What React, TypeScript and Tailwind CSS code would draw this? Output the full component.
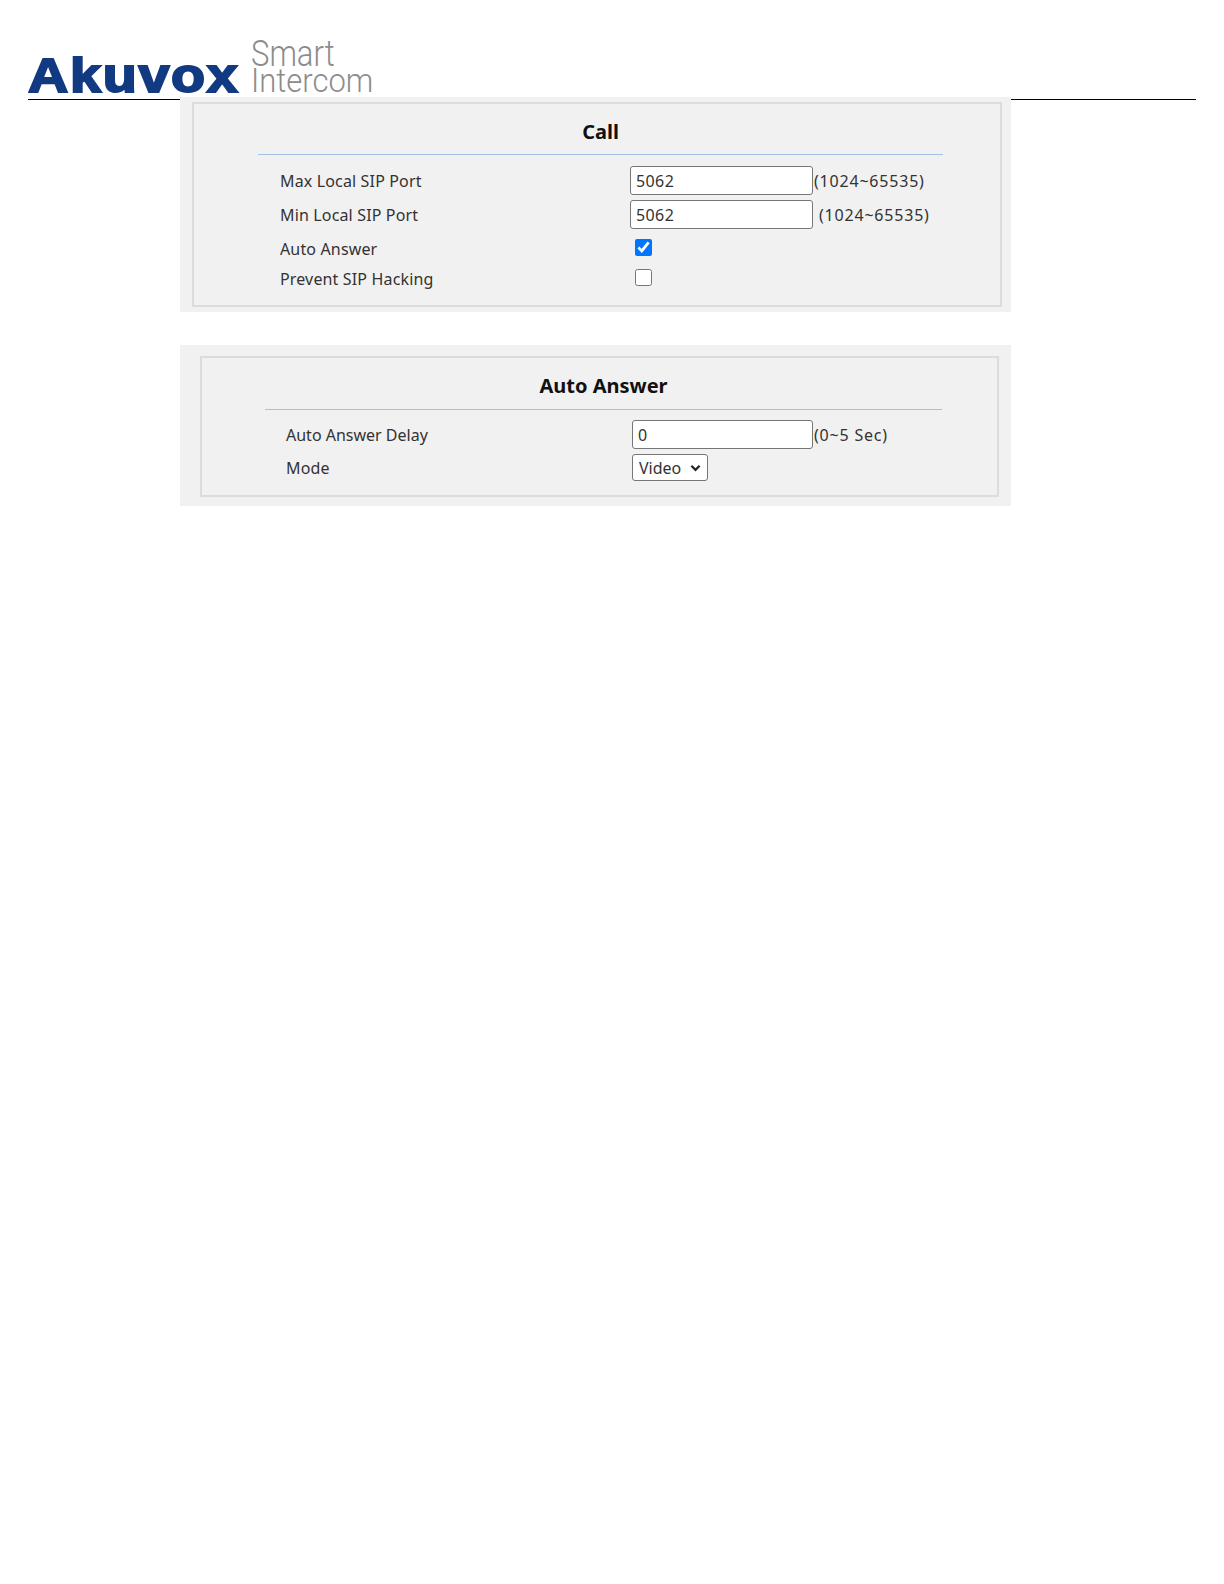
export default function App() {
  return (
    <div className="h-[1584px] w-[1224px] bg-white font-['Noto_Sans',sans-serif] text-[16px] text-[#333]">
      <Header />
      <div className="relative ml-[180px] mt-[-3px] flex w-[831px] flex-col gap-[33px]">
        <Panel title="Call" className="h-[215px] pb-[5px] pl-[12px] pr-[9px] pt-[5px]" lineClass="ml-[64px] w-[685px]" titleClass="h-[51px] pt-[16px]">
          <div className="flex flex-col pl-[86px] pt-[11px]">
            <Row label="Max Local SIP Port" labelWidth="w-[350px]" className="h-[29px]">
              <TextInput value="5062" widthClass="w-[183px]" />
              <Hint className="ml-[1px]">(1024~65535)</Hint>
            </Row>
            <Row label="Min Local SIP Port" labelWidth="w-[350px]" className="mt-[5px] h-[29px]">
              <TextInput value="5062" widthClass="w-[183px]" />
              <Hint className="ml-[6px]">(1024~65535)</Hint>
            </Row>
            <Row label="Auto Answer" labelWidth="w-[350px]" className="mt-[9px] h-[22px]">
              <input type="checkbox" defaultChecked className="mb-[4px] ml-[5px] h-[17px] w-[17px] accent-[#0075ff]" />
            </Row>
            <Row label="Prevent SIP Hacking" labelWidth="w-[350px]" className="mt-[8px] h-[22px]">
              <input type="checkbox" className="mb-[4px] ml-[5px] h-[17px] w-[17px]" />
            </Row>
          </div>
        </Panel>

        <Panel title="Auto Answer" className="h-[161px] pb-[9px] pl-[20px] pr-[12px] pt-[11px]" lineClass="ml-[63px] w-[677px]" titleClass="h-[52px] pt-[16px]">
          <div className="flex flex-col pl-[84px] pt-[10px]">
            <Row label="Auto Answer Delay" labelWidth="w-[346px] tracking-normal" className="h-[29px]">
              <TextInput value="0" widthClass="w-[181px]" />
              <Hint className="ml-[1px]">(0~5 Sec)</Hint>
            </Row>
            <Row label="Mode" labelWidth="w-[346px]" className="mt-[5px] h-[27px]">
              <div className="relative h-[27px] w-[76px]">
                <select defaultValue="Video" className="h-full w-full appearance-none rounded-[3px] border border-[#767676] bg-white pl-[6px] text-[16px] text-[#333]">
                  <option>Video</option>
                  <option>Audio</option>
                </select>
                <svg viewBox="0 0 12 8" className="pointer-events-none absolute right-[7px] top-[10px] h-[8px] w-[11px]">
                  <polyline points="1.5,1.5 6,6 10.5,1.5" fill="none" stroke="#222" strokeWidth="2.4" />
                </svg>
              </div>
            </Row>
          </div>
        </Panel>
      </div>
    </div>
  );
}

function Header() {
  return (
    <div className="ml-[28px] flex h-[100px] w-[1168px] items-start border-b border-black">
      <div className="mt-[50px] w-[223px] shrink-0 origin-left scale-x-[1.16] font-['Liberation_Sans',sans-serif] text-[48px] font-bold leading-[51px] tracking-[1.5px] text-[#123a82] [-webkit-text-stroke:2px_#123a82]">
        Akuvox
      </div>
      <div className="mt-[42px] flex flex-col font-['Roboto',sans-serif] text-[31px] font-light leading-[28px] text-[#8c8c8c]">
        <div className="h-[26px] origin-bottom scale-y-[1.2]">Smart</div>
        <div className="h-[28px] origin-bottom scale-y-[1.05]">Intercom</div>
      </div>
    </div>
  );
}

function Panel({
  title,
  className,
  lineClass,
  titleClass,
  children,
}: {
  title: string;
  className: string;
  lineClass: string;
  titleClass: string;
  children: React.ReactNode;
}) {
  return (
    <div className={`bg-[#f1f1f1] ${className}`}>
      <div className="h-full border-2 border-[#dcdcdc]">
        <div className={`${lineClass} ${titleClass} border-b border-[#a3c0e6] text-center text-[20px] font-bold leading-[24px] text-[#111]`}>
          {title}
        </div>
        {children}
      </div>
    </div>
  );
}

function Row({
  label,
  labelWidth,
  className,
  children,
}: {
  label: string;
  labelWidth: string;
  className: string;
  children: React.ReactNode;
}) {
  return (
    <div className={`flex items-center ${className}`}>
      <span className={`${labelWidth} shrink-0 tracking-[0.15px]`}>{label}</span>
      {children}
    </div>
  );
}

function Hint({ className = '', children }: { className?: string; children: React.ReactNode }) {
  return <span className={`${className} tracking-[0.8px]`}>{children}</span>;
}

function TextInput({ value, widthClass }: { value: string; widthClass: string }) {
  return (
    <input
      type="text"
      defaultValue={value}
      className={`${widthClass} h-[29px] rounded-[3px] border border-[#767676] bg-white px-[5px] text-[16px] tracking-[0.4px] text-[#333]`}
    />
  );
}
